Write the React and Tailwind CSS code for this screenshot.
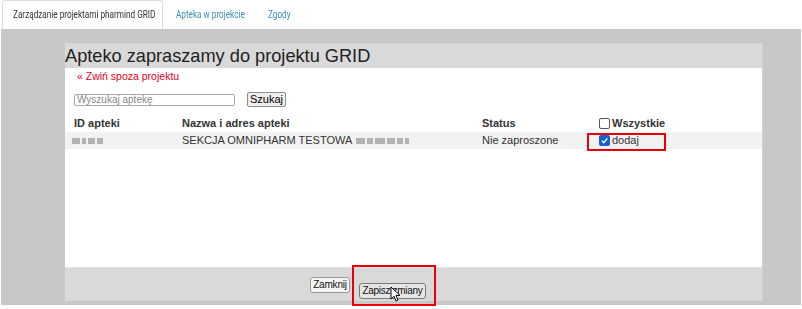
import React from 'react';

const font = { fontFamily: '"Liberation Sans", Arial, sans-serif' };

function Blur({ w }) {
  return (
    <span className="inline-flex items-center gap-[2px] align-middle blur-[0.7px]">
      {w.map((x, i) => (
        <span key={i} className="inline-block h-[6px] bg-[#b3b3b3]" style={{ width: x }} />
      ))}
    </span>
  );
}

export default function App() {
  return (
    <div className="w-[802px] h-[309px] bg-white overflow-hidden relative" style={font}>
      {/* taby */}
      <div className="h-[29px] flex items-end pl-[2px] font-['Roboto',sans-serif] text-[10.5px] whitespace-nowrap">
        <div className="h-[29px] w-[161px] bg-white border border-b-0 border-[#dcdcdc] rounded-t-[3px] flex items-center pl-[10px] text-[#333] overflow-hidden">
          <span className="inline-block origin-left scale-x-[0.78]">Zarządzanie projektami pharmind GRID</span>
        </div>
        <div className="h-[29px] w-[105px] flex items-center pl-[13px] text-[#3c8dbc]">
          <span className="inline-block origin-left scale-x-[0.78]">Apteka w projekcie</span>
        </div>
        <div className="h-[29px] flex items-center text-[#3c8dbc]">
          <span className="inline-block origin-left scale-x-[0.78]">Zgody</span>
        </div>
      </div>

      {/* szare tło */}
      <div className="ml-[1px] w-[800px] h-[276px] bg-[#c8c8c8] pt-[14px] pl-[64px]">
        <div className="w-[698px] border-r border-[#d0d0d0]">
          <div className="h-[25px] bg-[#d9d9d9] flex items-center text-[18.2px] text-[#222] leading-none pt-[1px] whitespace-nowrap">
            Apteko zapraszamy do projektu GRID
          </div>

          <div className="h-[199px] bg-white text-[11px] text-[#333]">
            <div className="pl-[12px] pt-[1px] h-[17px] flex items-center text-[#e3001b] text-[10.5px]">
              « Zwiń spoza projektu
            </div>
            <div className="flex items-start pl-[9px] h-[21px]">
              <div className="mt-[9px] w-[161px] h-[12px] border border-[#a9a9a9] rounded-[2px] text-[10px] text-[#8a8a8a] flex items-center pl-[2px] leading-none">
                Wyszukaj aptekę
              </div>
              <button className="mt-[7px] ml-[12px] h-[15px] px-[2px] border border-[#8f8f8f] rounded-[2px] bg-[#efefef] text-[11px] text-black leading-none whitespace-nowrap">
                Szukaj
              </button>
            </div>

            <div className="flex items-center h-[26px] pt-[8px] pl-[9px] font-bold text-[11px] text-[#333]">
              <div className="w-[108px]">ID apteki</div>
              <div className="w-[300px]">Nazwa i adres apteki</div>
              <div className="w-[117px]">Status</div>
              <div className="flex items-center gap-[2px]">
                <span className="inline-block w-[11px] h-[11px] border border-[#555] rounded-[2px] bg-white" />
                <span>Wszystkie</span>
              </div>
            </div>

            <div className="flex items-center h-[17px] bg-[#f2f2f2] pl-[7px] text-[11px] text-[#333] whitespace-nowrap">
              <div className="w-[110px]">
                <Blur w={[8, 4, 7, 6]} />
              </div>
              <div className="w-[300px] flex items-center gap-[4px]">
                <span>SEKCJA OMNIPHARM TESTOWA</span>
                <Blur w={[9, 6, 10, 8, 6, 4]} />
              </div>
              <div className="w-[117px]">Nie zaproszone</div>
              <div className="relative h-[17px] flex items-center gap-[2px]">
                <span className="w-[11px] h-[11px] rounded-[2px] bg-[#1a5fd0] flex items-center justify-center">
                  <svg width="9" height="9" viewBox="0 0 10 10">
                    <path d="M2 5.2 L4.2 7.4 L8.2 2.6" stroke="white" strokeWidth="1.6" fill="none" />
                  </svg>
                </span>
                <span>dodaj</span>
                <div className="absolute left-[-12px] top-[1px] w-[79px] h-[18px] border-2 border-[#e8000b]" />
              </div>
            </div>
          </div>

          <div className="h-[34px] bg-[#d9d9d9] border-t border-[#e4e4e4] flex items-start pt-[9px] pl-[245px] gap-[9px] whitespace-nowrap">
            <button className="h-[16px] w-[40px] border border-[#9a9a9a] rounded-[3px] bg-[#f4f4f4] text-[10px] tracking-[-0.2px] text-[#111] leading-none">
              Zamknij
            </button>
            <div className="relative">
              <button className="h-[16px] w-[67px] border border-[#7a7a7a] rounded-[3px] bg-[#e6e6e6] text-[10px] tracking-[-0.3px] text-[#111] leading-none">
                Zapisz zmiany
              </button>
              <div className="absolute left-[-7px] top-[-12px] w-[84px] h-[41px] border-2 border-[#e8000b]" />
              <svg className="absolute left-[31px] top-[9px]" width="11" height="16" viewBox="0 0 11 16">
                <path d="M1 1 L1 13 L4 10.2 L6 15 L8 14 L6 9.4 L10 9.4 Z" fill="white" stroke="black" strokeWidth="1" strokeLinejoin="round" />
              </svg>
            </div>
          </div>
        </div>
      </div>
    </div>
  );
}
